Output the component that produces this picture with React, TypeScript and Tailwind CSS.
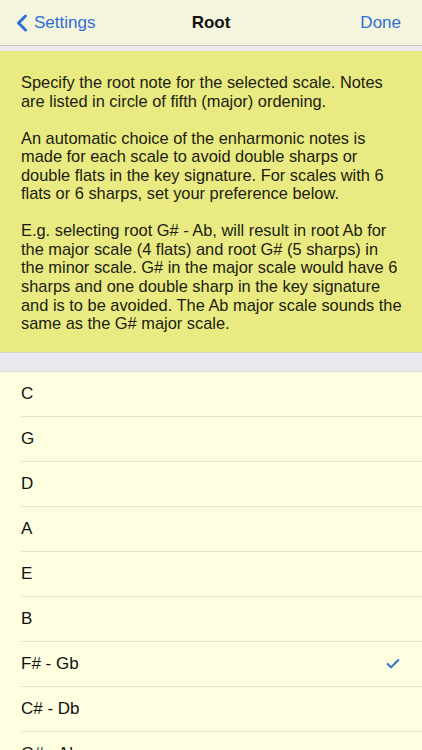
import { ChevronLeft, Check } from "lucide-react";

const notes = ["C", "G", "D", "A", "E", "B", "F# - Gb", "C# - Db", "G# - Ab", "D# - Eb"];

const help = [
  [
    "Specify the root note for the selected scale. Notes",
    "are listed in circle of fifth (major) ordening.",
  ],
  [
    "An automatic choice of the enharmonic notes is",
    "made for each scale to avoid double sharps or",
    "double flats in the key signature. For scales with 6",
    "flats or 6 sharps, set your preference below.",
  ],
  [
    "E.g. selecting root G# - Ab, will result in root Ab for",
    "the major scale (4 flats) and root G# (5 sharps) in",
    "the minor scale. G# in the major scale would have 6",
    "sharps and one double sharp in the key signature",
    "and is to be avoided. The Ab major scale sounds the",
    "same as the G# major scale.",
  ],
];

export default function App() {
  const selected = "F# - Gb";

  return (
    <div
      className="w-[422px] h-[750px] overflow-hidden bg-[#fefee0] text-[#111]"
      style={{ fontFamily: '"Liberation Sans", Arial, sans-serif' }}
    >
      {/* Navigation bar */}
      <div className="h-[46px] bg-[#f5f5dd] border-b border-[#c8c8c0] flex items-center justify-between px-[10px] relative">
        <button className="flex items-center text-[#2f6ed8] text-[17px]">
          <ChevronLeft className="w-[28px] h-[28px] -ml-[2px]" strokeWidth={2.6} />
          <span className="-ml-[2px]">Settings</span>
        </button>
        <span className="absolute left-1/2 -translate-x-1/2 text-[17px] font-bold">Root</span>
        <button className="text-[#2f6ed8] text-[17px] pr-[11px]">Done</button>
      </div>

      <div className="h-[5px] bg-[#e9e9ef]" />

      {/* Help text */}
      <div className="bg-[#e9eb82] border-b border-[#d6d6c4] pl-[21px] pr-[10px] pt-[22px] pb-[19px] text-[16.4px] leading-[18.55px] text-[#1c1c10] flex flex-col gap-[18.55px]">
        {help.map((para, i) => (
          <p key={i}>
            {para.map((line) => (
              <span key={line} className="block whitespace-nowrap">
                {line}
              </span>
            ))}
          </p>
        ))}
      </div>

      <div className="h-[19px] bg-[#e9e9ef] border-b border-[#dcdcd0]" />

      {/* Notes list */}
      <ul className="bg-[#fefee0]">
        {notes.map((n) => (
          <li key={n} className="pl-[21px]">
            <div className="h-[45px] border-b border-[#e4e4cc] flex items-center justify-between pr-[21px] text-[17px]">
              <span>{n}</span>
              {n === selected && <Check className="w-[16px] h-[16px] text-[#2f6ed8]" strokeWidth={3} />}
            </div>
          </li>
        ))}
      </ul>
    </div>
  );
}
